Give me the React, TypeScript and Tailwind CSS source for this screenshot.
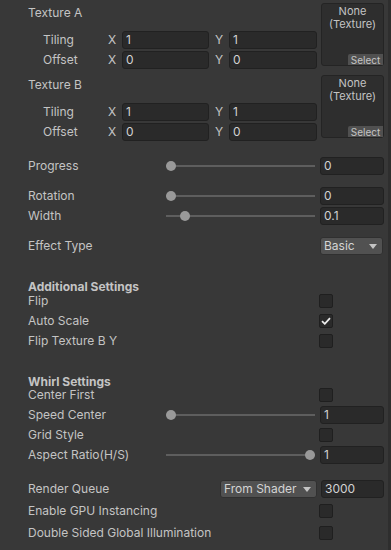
import React from 'react'

const FieldBox = ({ value, className = '' }: { value: string; className?: string }) => (
  <div className={`flex h-[18px] items-center rounded-[3px] border border-[#212121] bg-[#2a2a2a] px-[3px] text-[#d2d2d2] ${className}`}>
    {value}
  </div>
)

const Slider = ({ value }: { value: number }) => (
  <div className="relative h-[10px] flex-1">
    <div className="absolute left-0 right-0 top-[4px] h-[2px] bg-[#5e5e5e]" />
    <div
      className="absolute top-0 h-[10px] w-[10px] rounded-full bg-[#999999]"
      style={{ left: `calc(${value} * (100% - 10px))` }}
    />
  </div>
)

const Checkbox = ({ checked = false }: { checked?: boolean }) => (
  <div className="flex h-[14px] w-[14px] items-center justify-center rounded-[2px] border border-[#1f1f1f] bg-[#2a2a2a]">
    {checked && (
      <svg width="10" height="8" viewBox="0 0 10 8">
        <path d="M1 4.2 L3.8 6.8 L9 1.2" fill="none" stroke="#ececec" strokeWidth="1.8" />
      </svg>
    )}
  </div>
)

const Dropdown = ({ value, className = '' }: { value: string; className?: string }) => (
  <div className={`flex h-[18px] items-center justify-between rounded-[3px] border border-[#303030] bg-[#515151] pl-[3px] pr-[5px] text-[#d4d4d4] ${className}`}>
    <span>{value}</span>
    <svg width="8" height="5" viewBox="0 0 8 5">
      <path d="M0 0 H8 L4 5 Z" fill="#c4c4c4" />
    </svg>
  </div>
)

const VecRow = ({ label, x, y }: { label: string; x: string; y: string }) => (
  <div className="flex h-5 items-center">
    <span className="w-[80px] pl-[15px]">{label}</span>
    <span className="w-[14px]">X</span>
    <FieldBox value={x} className="w-[87px]" />
    <span className="ml-[6px] w-[14px]">Y</span>
    <FieldBox value={y} className="w-[88px]" />
  </div>
)

const TextureSlot = () => (
  <div className="relative h-[63px] w-[63px] rounded-[3px] border border-[#242424] bg-[#2e2e2e] pt-[1px] text-center text-[11px] leading-[13px] text-[#c4c4c4]">
    <div>None</div>
    <div>(Texture)</div>
    <div className="absolute bottom-0 right-0 flex h-[11px] w-[35px] items-center justify-center rounded-tl-[2px] bg-[#505050] text-[10px] leading-none">
      Select
    </div>
  </div>
)

const TextureBlock = ({ name }: { name: string }) => (
  <div className="flex">
    <div className="flex-1">
      <div className="flex h-5 items-center">{name}</div>
      <div className="mt-[7px]">
        <VecRow label="Tiling" x="1" y="1" />
        <VecRow label="Offset" x="0" y="0" />
      </div>
    </div>
    <TextureSlot />
  </div>
)

const SliderRow = ({ label, value, text }: { label: string; value: number; text: string }) => (
  <div className="flex h-5 items-center">
    <span className="w-[138px]">{label}</span>
    <Slider value={value} />
    <FieldBox value={text} className="ml-[5px] w-[64px]" />
  </div>
)

const ToggleRow = ({ label, checked, h = 'h-5' }: { label: string; checked?: boolean; h?: string }) => (
  <div className={`flex items-center ${h}`}>
    <span className="flex-1">{label}</span>
    <div className="w-[65px]">
      <Checkbox checked={checked} />
    </div>
  </div>
)

export default function App() {
  return (
    <div className="flex h-[550px] w-[391px] overflow-hidden bg-[#383838] font-['Inter','Noto_Sans',sans-serif] text-[12px] leading-none text-[#c4c4c4]">
      <div className="flex-1 pl-[28px] pr-[4px] pt-[3px]">
        <TextureBlock name="Texture A" />
        <div className="mt-[5px]">
          <TextureBlock name="Texture B" />
        </div>

        <div className="mt-[14px]">
          <SliderRow label="Progress" value={0} text="0" />
        </div>
        <div className="mt-[10px]">
          <SliderRow label="Rotation" value={0} text="0" />
          <SliderRow label="Width" value={0.1} text="0.1" />
        </div>
        <div className="mt-[10px] flex h-5 items-center">
          <span className="flex-1">Effect Type</span>
          <Dropdown value="Basic" className="w-[63px]" />
          <div className="w-px" />
        </div>

        <div className="mt-[24px] flex h-[14px] items-center font-bold">Additional Settings</div>
        <ToggleRow label="Flip" h="h-[14px]" />
        <div className="mt-[3px]">
          <ToggleRow label="Auto Scale" checked />
          <ToggleRow label="Flip Texture B Y" />
        </div>

        <div className="mt-[24px] flex h-[13px] items-center font-bold">Whirl Settings</div>
        <ToggleRow label="Center First" h="h-[14px]" />
        <div className="mt-[3px]">
          <SliderRow label="Speed Center" value={0} text="1" />
          <ToggleRow label="Grid Style" />
          <SliderRow label="Aspect Ratio(H/S)" value={1} text="1" />
        </div>

        <div className="mt-[14px] flex h-5 items-center">
          <span className="w-[192px]">Render Queue</span>
          <Dropdown value="From Shader" className="w-[97px]" />
          <FieldBox value="3000" className="ml-[4px] w-[63px]" />
        </div>
        <div className="mt-[2px]">
          <ToggleRow label="Enable GPU Instancing" />
        </div>
        <div className="mt-[2px]">
          <ToggleRow label="Double Sided Global Illumination" />
        </div>
      </div>
      <div className="w-[3px] bg-[#2e2e2e]" />
    </div>
  )
}
